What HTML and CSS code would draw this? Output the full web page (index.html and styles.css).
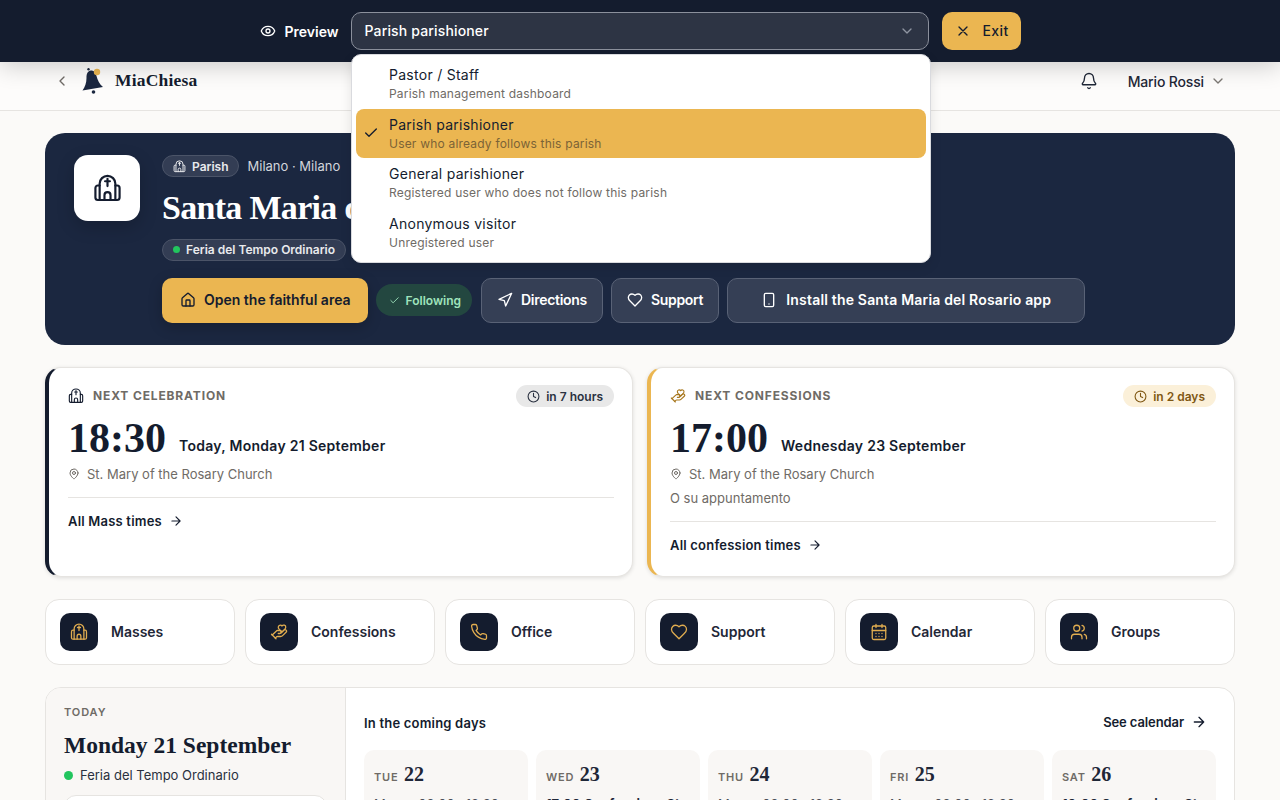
FILE: index.html
```html
<!DOCTYPE html>
<html lang="en">
<head>
    <meta charset="UTF-8">
    <title>MiaChiesa - Santa Maria del Rosario</title>
    <link rel="stylesheet" href="styles.css">
</head>
<body>
<svg class="icon-defs" aria-hidden="true">
    <symbol id="i-church" viewBox="0 0 24 24"><path d="M5.500 21.500V8a6.500 6.500 0 0 1 13 0v13.500"/><path d="M5.500 9.500H4a2 2 0 0 0-2 2v8a2 2 0 0 0 2 2h16a2 2 0 0 0 2-2v-8a2 2 0 0 0-2-2h-1.500"/><path d="M12 4v6M10 6h4"/><path d="M9.500 21.500v-4a2.500 2.500 0 0 1 5 0v4"/></symbol>
    <symbol id="i-hand" viewBox="0 0 24 24"><path d="M11 14h2a2 2 0 1 0 0-4h-3c-.6 0-1.100.2-1.400.6L3 16"/><path d="m7 20 1.600-1.400c.3-.4.8-.6 1.400-.6h4c1.100 0 2.100-.4 2.800-1.200l4.600-4.400a2 2 0 0 0-2.750-2.910l-4.200 3.900"/><path d="m2 15 6 6"/><path d="M19.500 8.500c.7-.7 1.500-1.600 1.500-2.700A2.730 2.730 0 0 0 16 4a2.780 2.780 0 0 0-5 1.800c0 1.200.8 2 1.500 2.800L16 12Z"/></symbol>
    <symbol id="i-clock" viewBox="0 0 24 24"><circle cx="12" cy="12" r="10"/><path d="M12 6v6l4 2"/></symbol>
    <symbol id="i-pin" viewBox="0 0 24 24"><path d="M20 10c0 6-8 12-8 12s-8-6-8-12a8 8 0 0 1 16 0Z"/><circle cx="12" cy="10" r="3"/></symbol>
    <symbol id="i-arrow" viewBox="0 0 24 24"><path d="M5 12h14M12 5l7 7-7 7"/></symbol>
    <symbol id="i-heart" viewBox="0 0 24 24"><path d="M19 14c1.490-1.460 3-3.210 3-5.500A5.500 5.500 0 0 0 16.500 3c-1.760 0-3 .5-4.500 2-1.500-1.500-2.740-2-4.500-2A5.500 5.500 0 0 0 2 8.500c0 2.300 1.500 4.050 3 5.500l7 7Z"/></symbol>
    <symbol id="i-chevron" viewBox="0 0 24 24"><path d="m6 9 6 6 6-6"/></symbol>
</svg>

<div class="preview-bar">
    <span class="preview-label">
        <svg class="icon" viewBox="0 0 24 24"><path d="M2.062 12.348a1 1 0 0 1 0-.696 10.750 10.750 0 0 1 19.876 0 1 1 0 0 1 0 .696 10.750 10.750 0 0 1-19.876 0"/><circle cx="12" cy="12" r="3"/></svg>
        Preview
    </span>
    <div class="role-select">
        <div class="role-current">
            <span>Parish parishioner</span>
            <svg class="icon"><use href="#i-chevron"/></svg>
        </div>
        <ul class="role-menu">
            <li class="role-option">
                <strong>Pastor / Staff</strong>
                <small>Parish management dashboard</small>
            </li>
            <li class="role-option selected">
                <svg class="icon role-check" viewBox="0 0 24 24"><path d="M20 6 9 17l-5-5"/></svg>
                <strong>Parish parishioner</strong>
                <small>User who already follows this parish</small>
            </li>
            <li class="role-option">
                <strong>General parishioner</strong>
                <small>Registered user who does not follow this parish</small>
            </li>
            <li class="role-option">
                <strong>Anonymous visitor</strong>
                <small>Unregistered user</small>
            </li>
        </ul>
    </div>
    <button class="exit-btn">
        <svg class="icon" viewBox="0 0 24 24"><path d="M18 6 6 18M6 6l12 12"/></svg>
        Exit
    </button>
</div>

<header class="topnav">
    <div class="brand">
        <svg class="icon back" viewBox="0 0 24 24"><path d="m15 18-6-6 6-6"/></svg>
        <svg class="brand-logo" viewBox="0 0 26 30">
            <path class="bell-body" d="M10 4.500C6 5 5.500 8.500 5.500 12c0 5-1.500 9-4 12.500L22 21c-3.500-2.500-5.500-7-6.500-11-1-3.500-2.500-6-5.500-5.500Z"/>
            <circle class="bell-body" cx="7.500" cy="3.200" r="1.200"/>
            <circle class="bell-body" cx="12.500" cy="26" r="1.800"/>
            <circle class="bell-dot" cx="16" cy="6" r="3.200"/>
        </svg>
        <span class="brand-name">MiaChiesa</span>
    </div>
    <div class="user-area">
        <svg class="icon nav-bell" viewBox="0 0 24 24"><path d="M10.268 21a2 2 0 0 0 3.464 0"/><path d="M3.262 15.326A1 1 0 0 0 4 17h16a1 1 0 0 0 .74-1.673C19.410 13.956 18 12.499 18 8A6 6 0 0 0 6 8c0 4.499-1.411 5.956-2.738 7.326"/></svg>
        <span class="user-name">Mario Rossi</span>
        <svg class="icon user-chevron"><use href="#i-chevron"/></svg>
    </div>
</header>

<main class="page">
    <section class="hero">
        <div class="hero-logo"><svg class="icon"><use href="#i-church"/></svg></div>
        <div class="hero-body">
            <div class="hero-meta">
                <span class="pill"><svg class="icon"><use href="#i-church"/></svg>Parish</span>
                <span class="hero-place">Milano · Milano</span>
            </div>
            <h1>Santa Maria del Rosario</h1>
            <span class="pill liturgy"><i class="dot"></i>Feria del Tempo Ordinario</span>
            <div class="hero-actions">
                <a class="btn btn-primary">
                    <svg class="icon" viewBox="0 0 24 24"><path d="M15 21v-8a1 1 0 0 0-1-1h-4a1 1 0 0 0-1 1v8"/><path d="M3 10a2 2 0 0 1 .709-1.528l7-5.999a2 2 0 0 1 2.582 0l7 5.999A2 2 0 0 1 21 10v9a2 2 0 0 1-2 2H5a2 2 0 0 1-2-2z"/></svg>
                    Open the faithful area
                </a>
                <span class="following">
                    <svg class="icon" viewBox="0 0 24 24"><path d="M20 6 9 17l-5-5"/></svg>
                    Following
                </span>
                <a class="btn btn-ghost">
                    <svg class="icon" viewBox="0 0 24 24"><path d="m3 11 19-9-9 19-2-8-8-2z"/></svg>
                    Directions
                </a>
                <a class="btn btn-ghost"><svg class="icon"><use href="#i-heart"/></svg>Support</a>
                <a class="btn btn-ghost btn-install">
                    <svg class="icon" viewBox="0 0 24 24"><rect x="5" y="2" width="14" height="20" rx="2"/><path d="M12 18h.01"/></svg>
                    Install the Santa Maria del Rosario app
                </a>
            </div>
        </div>
    </section>

    <section class="next-grid">
        <article class="next-card navy">
            <div class="next-head">
                <span class="next-label"><svg class="icon"><use href="#i-church"/></svg>NEXT CELEBRATION</span>
                <span class="when"><svg class="icon"><use href="#i-clock"/></svg>in 7 hours</span>
            </div>
            <div class="next-time"><b>18:30</b><span>Today, Monday 21 September</span></div>
            <p class="next-place"><svg class="icon"><use href="#i-pin"/></svg>St. Mary of the Rosary Church</p>
            <a class="next-link">All Mass times <svg class="icon"><use href="#i-arrow"/></svg></a>
        </article>
        <article class="next-card gold">
            <div class="next-head">
                <span class="next-label"><svg class="icon"><use href="#i-hand"/></svg>NEXT CONFESSIONS</span>
                <span class="when soon"><svg class="icon"><use href="#i-clock"/></svg>in 2 days</span>
            </div>
            <div class="next-time"><b>17:00</b><span>Wednesday 23 September</span></div>
            <p class="next-place"><svg class="icon"><use href="#i-pin"/></svg>St. Mary of the Rosary Church</p>
            <p class="next-note">O su appuntamento</p>
            <a class="next-link">All confession times <svg class="icon"><use href="#i-arrow"/></svg></a>
        </article>
    </section>

    <nav class="quick-grid">
        <a class="quick"><span class="quick-icon"><svg class="icon"><use href="#i-church"/></svg></span>Masses</a>
        <a class="quick"><span class="quick-icon"><svg class="icon"><use href="#i-hand"/></svg></span>Confessions</a>
        <a class="quick"><span class="quick-icon"><svg class="icon" viewBox="0 0 24 24"><path d="M22 16.920v3a2 2 0 0 1-2.180 2 19.790 19.790 0 0 1-8.630-3.070 19.500 19.500 0 0 1-6-6 19.790 19.790 0 0 1-3.070-8.670A2 2 0 0 1 4.110 2h3a2 2 0 0 1 2 1.720 12.840 12.840 0 0 0 .7 2.810 2 2 0 0 1-.45 2.110L8.090 9.910a16 16 0 0 0 6 6l1.270-1.270a2 2 0 0 1 2.110-.45 12.840 12.840 0 0 0 2.810.7A2 2 0 0 1 22 16.920z"/></svg></span>Office</a>
        <a class="quick"><span class="quick-icon"><svg class="icon"><use href="#i-heart"/></svg></span>Support</a>
        <a class="quick"><span class="quick-icon"><svg class="icon" viewBox="0 0 24 24"><path d="M8 2v4M16 2v4"/><rect x="3" y="4" width="18" height="18" rx="2"/><path d="M3 10h18M8 14h.01M12 14h.01M16 14h.01M8 18h.01M12 18h.01M16 18h.01"/></svg></span>Calendar</a>
        <a class="quick"><span class="quick-icon"><svg class="icon" viewBox="0 0 24 24"><path d="M16 21v-2a4 4 0 0 0-4-4H6a4 4 0 0 0-4 4v2"/><circle cx="9" cy="7" r="4"/><path d="M22 21v-2a4 4 0 0 0-3-3.870M16 3.130a4 4 0 0 1 0 7.750"/></svg></span>Groups</a>
    </nav>

    <section class="agenda">
        <div class="agenda-today">
            <span class="today-label">TODAY</span>
            <h2>Monday 21 September</h2>
            <p class="today-feria"><i class="dot"></i>Feria del Tempo Ordinario</p>
            <div class="today-box">Messe 08:00 · 18:30</div>
        </div>
        <div class="agenda-next">
            <div class="agenda-head">
                <h3>In the coming days</h3>
                <a>See calendar <svg class="icon"><use href="#i-arrow"/></svg></a>
            </div>
            <div class="day-grid">
                <div class="day"><div class="day-name">TUE <b>22</b></div><p>Messe 08:00 · 18:30</p></div>
                <div class="day"><div class="day-name">WED <b>23</b></div><p><b>17:00 Confessions St.</b></p></div>
                <div class="day"><div class="day-name">THU <b>24</b></div><p>Messe 08:00 · 18:30</p></div>
                <div class="day"><div class="day-name">FRI <b>25</b></div><p>Messe 08:00 · 18:30</p></div>
                <div class="day"><div class="day-name">SAT <b>26</b></div><p><b>10:00 Confessions St.</b></p></div>
            </div>
        </div>
    </section>
</main>
</body>
</html>
```

FILE: styles.css
```css
* {
    box-sizing: border-box;
}
html, body {
    height: 100%;
    overflow: hidden;
}
body {
    margin: 0;
    font-family: Inter, "Liberation Sans", sans-serif;
    background-color: #fbfaf8;
    color: #141c2e;
}
h1, h2, h3, p, ul {
    margin: 0;
    padding: 0;
}
.icon-defs {
    display: none;
}
.icon {
    width: 16px;
    height: 16px;
    flex: none;
    fill: none;
    stroke: currentColor;
    stroke-width: 2;
    stroke-linecap: round;
    stroke-linejoin: round;
}

/* preview bar */
.preview-bar {
    position: relative;
    z-index: 5;
    height: 62px;
    display: flex;
    align-items: center;
    justify-content: center;
    gap: 12px;
    background: #141c2e;
    box-shadow: 0 4px 24px rgba(0,0,0,0.2);
}
.preview-label {
    display: flex;
    align-items: center;
    gap: 9px;
    color: #fff;
    font-size: 14px;
    font-weight: 600;
}
.role-select {
    position: relative;
    width: 578px;
}
.role-current {
    height: 38px;
    display: flex;
    align-items: center;
    justify-content: space-between;
    padding: 0 13px 1px;
    background: #2d3444;
    border: 1px solid #8b909c;
    border-radius: 10px;
    color: #fff;
    font-size: 14px;
    font-weight: 500;
    letter-spacing: 0.15px;
}
.role-current .icon {
    color: #8f95a1;
}
.role-menu {
    position: absolute;
    top: 42px;
    left: 0;
    width: 580px;
    height: 209px;
    padding: 4px;
    list-style: none;
    background: #fff;
    border: 1px solid #d9dade;
    border-radius: 10px;
    box-shadow: 0 4px 12px rgba(0,0,0,0.1);
}
.role-option {
    position: relative;
    height: 49.500px;
    padding: 6px 0 0 33.500px;
}
.role-option strong {
    display: block;
    font-size: 14px;
    font-weight: 400;
    line-height: 20px;
    letter-spacing: 0.27px;
    color: #141c2e;
}
.role-option small {
    display: block;
    margin-top: 1px;
    font-size: 12px;
    line-height: 16px;
    letter-spacing: 0.2px;
    color: #6f6b66;
}
.role-option.selected {
    background: #ebb651;
    border-radius: 8px;
}
.role-option.selected small {
    color: #7b6336;
}
.role-check {
    position: absolute;
    left: 7px;
    top: 16px;
}
.exit-btn {
    height: 38px;
    width: 79px;
    display: flex;
    align-items: center;
    gap: 12px;
    margin-left: 1px;
    padding: 0 13px 1px;
    background: #ebb651;
    color: #141c2e;
    border: none;
    border-radius: 10px;
    font: 500 14px Inter, sans-serif;
    letter-spacing: 0.4px;
}

/* top nav */
.topnav {
    height: 49px;
    display: flex;
    align-items: center;
    justify-content: space-between;
    padding: 0 54px 10px 54px;
    background: #fdfcfb;
    border-bottom: 1px solid #e6e4e1;
}
.brand {
    display: flex;
    align-items: center;
}
.back {
    color: #6f6b66;
}
.brand-logo {
    width: 26px;
    height: 30px;
    margin: 0 8px 0 11px;
}
.bell-body {
    fill: #1b2740;
}
.bell-dot {
    fill: #ebb651;
}
.brand-name {
    padding-bottom: 2px;
    font-family: "Liberation Serif", serif;
    font-size: 17.500px;
    font-weight: 700;
    letter-spacing: 0.2px;
}
.user-area {
    display: flex;
    align-items: center;
    font-size: 14px;
    font-weight: 500;
    letter-spacing: -0.15px;
    color: #1f2737;
}
.nav-bell {
    width: 18px;
    height: 18px;
    margin-right: 30px;
    stroke-width: 1.800;
}
.user-chevron {
    margin-left: 6px;
    color: #7b7873;
}

/* page */
.page {
    padding: 22px 45px 0;
}
.hero {
    height: 212px;
    display: flex;
    gap: 22px;
    padding: 22px 29px;
    background: #1b2740;
    border-radius: 20px;
    color: #fff;
}
.hero-logo {
    width: 66px;
    height: 66px;
    display: flex;
    align-items: center;
    justify-content: center;
    background: #fff;
    border-radius: 14px;
    color: #141c2e;
    box-shadow: 0 6px 18px rgba(0,0,0,0.2);
}
.hero-logo .icon {
    width: 29px;
    height: 29px;
    stroke-width: 1.800;
}
.hero-meta {
    display: flex;
    align-items: center;
    gap: 9px;
    height: 22px;
}
.hero-place {
    font-size: 13px;
    color: #d2d5db;
}
.pill {
    display: inline-flex;
    align-items: center;
    gap: 6px;
    height: 22px;
    padding: 0 9px 0 10px;
    background: #333d54;
    border: 1px solid #4b5468;
    border-radius: 11px;
    font-size: 12px;
    font-weight: 600;
    color: #e9eaed;
}
.pill .icon {
    width: 13px;
    height: 13px;
    stroke-width: 1.800;
}
.pill.liturgy {
    padding-right: 10px;
}
.hero h1 {
    margin: 12px 0 10px;
    font-family: "Liberation Serif", serif;
    font-size: 34px;
    line-height: 38px;
    font-weight: 700;
    letter-spacing: -0.7px;
    white-space: nowrap;
}
.dot {
    width: 7px;
    height: 7px;
    flex: none;
    border-radius: 50%;
    background: #22c55e;
}
.hero-actions {
    display: flex;
    align-items: center;
    gap: 8px;
    margin-top: 17px;
}
.btn {
    height: 45px;
    display: flex;
    align-items: center;
    gap: 8px;
    padding: 0 15px 1px;
    border-radius: 10px;
    font-size: 14px;
    font-weight: 600;
    letter-spacing: -0.3px;
}
.btn-primary {
    gap: 8px;
    padding: 0 17px 1px 18px;
    background: #ebb651;
    color: #141c2e;
    letter-spacing: 0;
    box-shadow: 0 4px 14px rgba(0,0,0,0.22);
}
.btn-ghost {
    background: #353f55;
    border: 1px solid #596276;
    color: #fff;
}
.btn-install {
    width: 358px;
    justify-content: center;
    gap: 9px;
    letter-spacing: 0.18px;
}
.following {
    height: 32px;
    display: flex;
    align-items: center;
    gap: 6px;
    padding: 0 11px 0 13px;
    background: #234740;
    border-radius: 16px;
    color: #9fe3bc;
    font-size: 12px;
    font-weight: 600;
    margin-right: 1px;
}
.following .icon {
    width: 11px;
    height: 11px;
}

/* next celebration cards */
.next-grid {
    display: grid;
    grid-template-columns: 1fr 1fr;
    gap: 14px;
    height: 210px;
    margin-top: 22px;
}
.next-card {
    display: flex;
    flex-direction: column;
    padding: 17px 18px 0 19px;
    background: #fff;
    border: 1px solid #e6e4e1;
    border-left-width: 4px;
    border-radius: 16px;
    box-shadow: 0 1px 4px rgba(0,0,0,0.12);
}
.next-card.navy {
    border-left-color: #141c2e;
}
.next-card.gold {
    border-left-color: #ebb651;
}
.next-head {
    height: 22px;
    display: flex;
    align-items: center;
    justify-content: space-between;
}
.next-label {
    display: flex;
    align-items: center;
    gap: 9px;
    padding-bottom: 1px;
    font-size: 12px;
    font-weight: 700;
    letter-spacing: 0.85px;
    color: #6f6b66;
}
.next-label .icon {
    color: #141c2e;
    stroke-width: 1.700;
}
.gold .next-label .icon {
    color: #a8781f;
}
.when {
    height: 22px;
    display: flex;
    align-items: center;
    gap: 6px;
    padding: 0 11px;
    background: #e8e8e8;
    border-radius: 11px;
    font-size: 12px;
    font-weight: 600;
    color: #2a3140;
}
.when .icon {
    width: 13px;
    height: 13px;
}
.when.soon {
    background: #fbf0d9;
    color: #7f5713;
}
.next-time {
    display: flex;
    align-items: flex-end;
    gap: 13px;
    margin-top: 8px;
    height: 46px;
}
.next-time b {
    font-family: "Liberation Serif", serif;
    font-size: 42px;
    line-height: 46px;
}
.next-time span {
    margin-bottom: 5px;
    font-size: 14px;
    line-height: 20px;
    font-weight: 600;
    letter-spacing: 0.27px;
}
.next-place {
    display: flex;
    align-items: center;
    gap: 7px;
    margin-top: 4px;
    font-size: 13px;
    line-height: 18px;
    color: #6f6b66;
}
.next-place .icon {
    width: 12px;
    height: 12px;
}
.next-note {
    margin-top: 6px;
    font-size: 13px;
    line-height: 18px;
    color: #6f6b66;
}
.next-link {
    display: flex;
    align-items: center;
    gap: 7px;
    margin-top: 14px;
    padding-top: 14px;
    border-top: 1px solid #e6e4e1;
    font-size: 13px;
    line-height: 18px;
    font-weight: 600;
    letter-spacing: 0.2px;
}
.next-link .icon {
    width: 14px;
    height: 14px;
}

/* quick links */
.quick-grid {
    display: grid;
    grid-template-columns: repeat(6, 1fr);
    gap: 10px;
    margin-top: 22px;
}
.quick {
    height: 66px;
    display: flex;
    align-items: center;
    gap: 13px;
    padding: 0 14px 1px;
    background: #fff;
    border: 1px solid #e6e4e1;
    border-radius: 14px;
    font-size: 14px;
    font-weight: 600;
    color: #1f2737;
}
.quick-icon {
    width: 38px;
    height: 38px;
    display: flex;
    align-items: center;
    justify-content: center;
    background: #141c2e;
    border-radius: 10px;
    color: #e1ad50;
}
.quick-icon .icon {
    width: 18px;
    height: 18px;
    stroke-width: 1.700;
}

/* agenda */
.agenda {
    display: flex;
    height: 200px;
    margin-top: 22px;
    background: #fff;
    border: 1px solid #e6e4e1;
    border-radius: 16px;
    overflow: hidden;
}
.agenda-today {
    width: 300px;
    flex: none;
    padding: 17px 18px 0;
    background: #f9f7f5;
    border-right: 1px solid #e6e4e1;
}
.today-label {
    display: block;
    font-size: 11px;
    line-height: 14px;
    font-weight: 600;
    letter-spacing: 0.9px;
    color: #6f6b66;
}
.agenda-today h2 {
    margin-top: 11px;
    font-family: "Liberation Serif", serif;
    font-size: 23.500px;
    line-height: 30px;
}
.today-feria {
    display: flex;
    align-items: center;
    gap: 7px;
    margin-top: 6px;
    font-size: 13px;
    line-height: 18px;
    color: #2a3140;
}
.today-feria .dot {
    width: 9px;
    height: 9px;
}
.today-box {
    margin-top: 11px;
    height: 60px;
    padding: 12px;
    background: #fff;
    border: 1px solid #e6e4e1;
    border-radius: 12px;
    font-size: 13px;
}
.agenda-next {
    flex: 1;
    padding: 25px 18px 0;
}
.agenda-head {
    display: flex;
    align-items: center;
    justify-content: space-between;
    height: 20px;
    padding-right: 9px;
}
.agenda-head h3 {
    font-size: 13px;
    font-weight: 600;
    letter-spacing: 0.2px;
}
.agenda-head a {
    display: flex;
    align-items: center;
    gap: 7px;
    padding-bottom: 2px;
    font-size: 13px;
    font-weight: 600;
    letter-spacing: -0.1px;
}
.day-grid {
    display: grid;
    grid-template-columns: repeat(5, 1fr);
    gap: 8px;
    margin-top: 17px;
}
.day {
    height: 100px;
    padding: 13px 10px;
    background: #f9f7f5;
    border-radius: 10px;
    font-size: 13px;
    white-space: nowrap;
    overflow: hidden;
}
.day-name {
    font-size: 11px;
    line-height: 22px;
    font-weight: 600;
    letter-spacing: 0.8px;
    color: #6f6b66;
}
.day-name b {
    margin-left: 2px;
    font-family: "Liberation Serif", serif;
    font-size: 20px;
    letter-spacing: 0;
    color: #1f2737;
}
.day p {
    margin-top: 8px;
    color: #4b4f58;
}
.day p b {
    color: #1f2737;
}
```
